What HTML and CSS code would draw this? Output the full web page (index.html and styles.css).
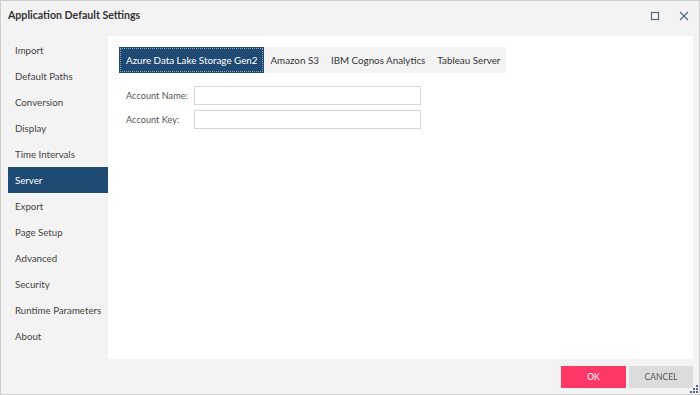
FILE: index.html
```html
<!DOCTYPE html>
<html lang="en">
<head>
  <meta charset="UTF-8">
  <title>Application Default Settings</title>
  <link rel="stylesheet" href="styles.css">
</head>
<body>

  <div class="dialog">
    <div class="titlebar">
      <span class="title">Application Default Settings</span>
      <div class="window-buttons">
        <svg width="10" height="10" viewBox="0 0 10 10"><rect x="1.5" y="1.5" width="7" height="7" fill="none" stroke="#4d6a88" stroke-width="1.2"/></svg>
        <svg width="10" height="10" viewBox="0 0 10 10"><path d="M1 1 L9 9 M9 1 L1 9" stroke="#4d6a88" stroke-width="1.1"/></svg>
      </div>
    </div>

    <div class="content">
      <ul class="sidebar">
        <li>Import</li>
        <li>Default Paths</li>
        <li>Conversion</li>
        <li>Display</li>
        <li>Time Intervals</li>
        <li class="selected">Server</li>
        <li>Export</li>
        <li>Page Setup</li>
        <li>Advanced</li>
        <li>Security</li>
        <li>Runtime Parameters</li>
        <li>About</li>
      </ul>

      <div class="panel">
        <div class="tabs">
          <div class="tab active">Azure Data Lake Storage Gen2</div>
          <div class="tab">Amazon S3</div>
          <div class="tab">IBM Cognos Analytics</div>
          <div class="tab">Tableau Server</div>
        </div>

        <div class="form">
          <label class="form-row">
            <span class="label">Account Name:</span>
            <input type="text">
          </label>
          <label class="form-row">
            <span class="label">Account Key:</span>
            <input type="text">
          </label>
        </div>
      </div>
    </div>

    <div class="footer">
      <button class="btn-ok">OK</button>
      <button class="btn-cancel">CANCEL</button>
      <svg class="grip" width="8" height="8" viewBox="0 0 8 8">
        <rect x="6" y="0" width="2" height="2" fill="#4d6a88"/>
        <rect x="3" y="3" width="2" height="2" fill="#4d6a88"/>
        <rect x="6" y="3" width="2" height="2" fill="#4d6a88"/>
        <rect x="0" y="6" width="2" height="2" fill="#4d6a88"/>
        <rect x="3" y="6" width="2" height="2" fill="#4d6a88"/>
        <rect x="6" y="6" width="2" height="2" fill="#4d6a88"/>
      </svg>
    </div>
  </div>

</body>
</html>
```

FILE: styles.css
```css
* {
  box-sizing: border-box;
}

body {
  margin: 0;
  padding: 0;
  font-family: 'Lato', 'Open Sans', sans-serif;
  background: #f3f3f3;
}

.dialog {
  width: 700px;
  height: 395px;
  border: 1px solid #cfcfcf;
  background: #f3f3f3;
  display: flex;
  flex-direction: column;
}

.titlebar {
  height: 35px;
  display: flex;
  justify-content: space-between;
  padding: 6px 10px 0 7px;
}

.title {
  font-size: 10.6px;
  font-weight: bold;
  color: #333;
  line-height: 16px;
  white-space: nowrap;
}

.window-buttons {
  display: flex;
  gap: 19px;
  padding-top: 4px;
}

.content {
  display: flex;
  height: 323px;
  padding-right: 6px;
}

.sidebar {
  list-style: none;
  margin: 0;
  padding: 1px 0 0 7px;
  width: 107px;
  flex-shrink: 0;
}

.sidebar li {
  height: 26px;
  line-height: 26px;
  padding-left: 7px;
  font-size: 9.7px;
  color: #444;
  white-space: nowrap;
}

.sidebar li.selected {
  background: #1f4b73;
  color: #fff;
}

.panel {
  flex: 1;
  background: #fff;
  padding: 11px;
}

.tabs {
  display: flex;
  width: fit-content;
  height: 26px;
  background: #f3f3f3;
}

.tab {
  padding: 0 6px;
  line-height: 26px;
  font-size: 9.8px;
  color: #333;
  white-space: nowrap;
}

.tab.active {
  background: #1f4b73;
  color: #fff;
  padding: 0 7px;
  outline: 1px dotted #8aa3bb;
  outline-offset: -2px;
}

.form {
  margin-top: 13px;
  display: flex;
  flex-direction: column;
  gap: 5px;
  padding-left: 7px;
}

.form-row {
  display: flex;
  align-items: center;
}

.label {
  width: 68px;
  font-size: 9.2px;
  color: #555;
  white-space: nowrap;
}

.form-row input {
  width: 227px;
  height: 19px;
  border: 1px solid #d6d6d6;
  outline: none;
  margin: 0;
}

.footer {
  flex: 1;
  display: flex;
  justify-content: flex-end;
  align-items: flex-start;
  gap: 3px;
  padding: 7px 6px 0 0;
  position: relative;
}

.footer button {
  height: 22px;
  border: none;
  font-family: inherit;
  font-size: 8.5px;
  cursor: pointer;
}

.btn-ok {
  width: 65px;
  background: #ff3867;
  color: #fff;
}

.btn-cancel {
  width: 64px;
  background: #dcdcdc;
  color: #555;
}

.grip {
  position: absolute;
  right: 1px;
  bottom: 1px;
}
```
